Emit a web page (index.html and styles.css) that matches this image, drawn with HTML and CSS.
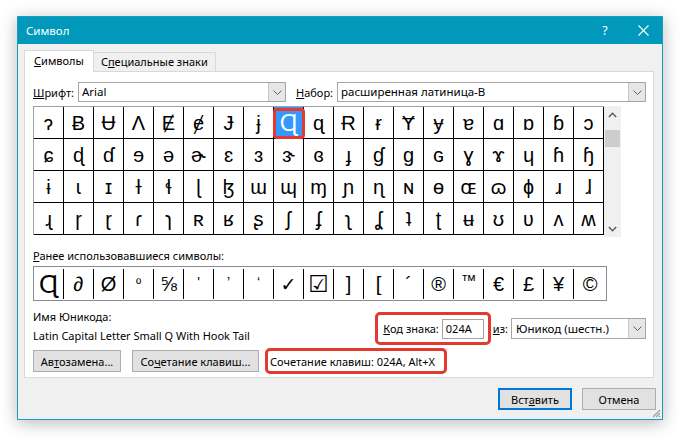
FILE: index.html
```html
<!DOCTYPE html>
<html lang="ru">
<head>
<meta charset="utf-8">
<title>Символ</title>
<link rel="stylesheet" href="styles.css">
</head>
<body>
<div class="dialog">
  <div class="titlebar">
    <span class="title">Символ</span>
    <span class="tb-help">?</span>
    <span class="tb-close"><svg width="11" height="11" viewBox="0 0 11 11"><path d="M0.5 0.5L10.5 10.5M10.5 0.5L0.5 10.5" stroke="#fff" stroke-width="1.1" fill="none"/></svg></span>
  </div>
  <div class="content">
    <div class="tabs">
      <div class="tab active"><u>С</u>имволы</div>
      <div class="tab">С<u>п</u>ециальные знаки</div>
    </div>
    <div class="panel">
      <div class="font-row">
        <span class="lbl lbl-font"><u>Ш</u>рифт:</span>
        <div class="select sel-font"><span class="sel-text">Arial</span><span class="sel-btn"><svg width="9" height="5" viewBox="0 0 9 5"><path d="M0.5 0.5L4.5 4.5L8.5 0.5" stroke="#606060" fill="none"/></svg></span></div>
        <span class="lbl lbl-set"><u>Н</u>абор:</span>
        <div class="select sel-set"><span class="sel-text">расширенная латиница-B</span><span class="sel-btn"><svg width="9" height="5" viewBox="0 0 9 5"><path d="M0.5 0.5L4.5 4.5L8.5 0.5" stroke="#606060" fill="none"/></svg></span></div>
      </div>
      <div class="charmap">
        <div class="cells">
          <span>ɂ</span><span>Ƀ</span><span>Ʉ</span><span>Ʌ</span><span>Ɇ</span><span>ɇ</span><span>Ɉ</span><span>ɉ</span><span class="selected">Ɋ</span><span>ɋ</span><span>Ɍ</span><span>ɍ</span><span>Ɏ</span><span>ɏ</span><span>ɐ</span><span>ɑ</span><span>ɒ</span><span>ɓ</span><span>ɔ</span>
          <span>ɕ</span><span>ɖ</span><span>ɗ</span><span>ɘ</span><span>ə</span><span>ɚ</span><span>ɛ</span><span>ɜ</span><span>ɝ</span><span>ɞ</span><span>ɟ</span><span>ɠ</span><span>ɡ</span><span>ɢ</span><span>ɣ</span><span>ɤ</span><span>ɥ</span><span>ɦ</span><span>ɧ</span>
          <span>ɨ</span><span>ɩ</span><span>ɪ</span><span>ɫ</span><span>ɬ</span><span>ɭ</span><span>ɮ</span><span>ɯ</span><span>ɰ</span><span>ɱ</span><span>ɲ</span><span>ɳ</span><span>ɴ</span><span>ɵ</span><span>ɶ</span><span>ɷ</span><span>ɸ</span><span>ɹ</span><span>ɺ</span>
          <span>ɻ</span><span>ɼ</span><span>ɽ</span><span>ɾ</span><span>ɿ</span><span>ʀ</span><span>ʁ</span><span>ʂ</span><span>ʃ</span><span>ʄ</span><span>ʅ</span><span>ʆ</span><span>ʇ</span><span>ʈ</span><span>ʉ</span><span>ʊ</span><span>ʋ</span><span>ʌ</span><span>ʍ</span>
        </div>
        <div class="vscroll">
          <svg class="arr" width="9" height="6" viewBox="0 0 9 6"><path d="M0.8 5L4.5 1.3L8.2 5" stroke="#606060" stroke-width="1.6" fill="none"/></svg>
          <div class="thumb"></div>
          <div class="track"></div>
          <svg class="arr" width="9" height="6" viewBox="0 0 9 6"><path d="M0.8 1L4.5 4.7L8.2 1" stroke="#606060" stroke-width="1.6" fill="none"/></svg>
        </div>
      </div>
      <div class="recent-label"><u>Р</u>анее использовавшиеся символы:</div>
      <div class="recent">
        <span class="big">Ɋ</span><span class="ital">∂</span><span>Ø</span><span class="small">º</span><span class="frac">⅝</span><span class="tiny">'</span><span class="tiny">’</span><span class="tiny">‘</span><span class="check">✓</span><span class="box">☑</span><span>]</span><span>[</span><span>´</span><span>®</span><span class="tm">™</span><span>€</span><span>£</span><span>¥</span><span>©</span>
      </div>
      <div class="lower">
        <div class="names">
          <div class="line">Имя Юникода:</div>
          <div class="line">Latin Capital Letter Small Q With Hook Tail</div>
        </div>
        <div class="code-group">
          <div class="hl code-box">
            <span class="lbl"><u>К</u>од знака:</span>
            <span class="input">024A</span>
          </div>
          <span class="lbl from-lbl"><u>и</u>з:</span>
          <div class="select sel-from"><span class="sel-text">Юникод (шестн.)</span><span class="sel-btn"><svg width="9" height="5" viewBox="0 0 9 5"><path d="M0.5 0.5L4.5 4.5L8.5 0.5" stroke="#606060" fill="none"/></svg></span></div>
        </div>
      </div>
      <div class="btn-row">
        <span class="btn btn-auto">Ав<u>т</u>озамена...</span>
        <span class="btn btn-keys">Со<u>ч</u>етание клавиш...</span>
        <div class="hl shortcut">Сочетание клавиш: 024A, Alt+X</div>
      </div>
    </div>
    <div class="footer">
      <span class="btn btn-default">Вст<u>а</u>вить</span>
      <span class="btn">Отмена</span>
    </div>
  </div>
  <svg class="grip" width="10" height="10" viewBox="0 0 10 10"><path d="M9 2L2 9M9 5L5 9M9 8L8 9" stroke="#a0a0a0" stroke-width="1.2"/></svg>
</div>
</body>
</html>
```
FILE: styles.css
```css
* { box-sizing: border-box; }
html, body { margin: 0; }
body {
  background: #ffffff;
  width: 684px;
  height: 442px;
  padding: 16px 0 0 17px;
  overflow: hidden;
  font-family: "Segoe UI", "Noto Sans", "DejaVu Sans", sans-serif;
  font-size: 11px;
  color: #000;
}
u { text-decoration: underline; text-underline-offset: 1px; }

.dialog {
  position: relative;
  width: 646px;
  height: 404px;
  background: #f0f0f0;
  border: 1px solid #1a9ec0;
  box-shadow: 0 3px 16px rgba(0,0,0,0.28);
  display: flex;
  flex-direction: column;
}
.titlebar {
  height: 27px;
  background: #0099bc;
  color: #fff;
  display: flex;
  align-items: center;
  padding-left: 8px;
}
.title { flex: 1; font-size: 11.5px; }
.tb-help { width: 14px; text-align: center; margin-right: 26px; font-size: 12.5px; }
.tb-close { width: 11px; height: 11px; margin-right: 13px; display: flex; }

.content {
  flex: 1;
  padding: 6px 6px 0 6px;
  display: flex;
  flex-direction: column;
}
.tabs { display: flex; height: 21px; }
.tab {
  height: 19px;
  margin-top: 2px;
  padding: 0 7px;
  border: 1px solid #d9d9d9;
  border-bottom: none;
  border-left: none;
  background: #f0f0f0;
  line-height: 17px;
}
.tab.active {
  position: relative;
  z-index: 1;
  height: 22px;
  margin-top: 0;
  padding: 0 9px;
  border-left: 1px solid #d9d9d9;
  background: #fff;
  line-height: 20px;
}
.panel {
  width: 630px;
  height: 307px;
  background: #fff;
  border: 1px solid #d9d9d9;
  padding: 10px 7px 0 8px;
}

.font-row { display: flex; align-items: center; height: 20px; }
.lbl { white-space: nowrap; }
.lbl-font { width: 45px; }
.lbl-set { width: 41px; margin-left: 10px; }
.select {
  height: 20px;
  border: 1px solid #a5a5a5;
  background: #fff;
  display: flex;
}
.sel-text { flex: 1; padding-left: 3px; line-height: 18px; white-space: nowrap; overflow: hidden; font-size: 11.5px; }
.sel-btn {
  width: 17px;
  background: #e6e6e6;
  border-left: 1px solid #c8c8c8;
  display: flex;
  align-items: center;
  justify-content: center;
}
.sel-font { width: 208px; }
.sel-set { width: 309px; }

.charmap {
  margin-top: 4px;
  display: flex;
  height: 131px;
}
.cells {
  display: grid;
  grid-template-columns: repeat(19, 30px);
  grid-auto-rows: 32px;
  border-top: 1px solid #a0a0a0;
  border-left: 1px solid #a0a0a0;
  align-self: flex-start;
  font-family: "Liberation Sans", "DejaVu Sans", sans-serif;
  font-size: 20px;
}
.cells span {
  border-right: 1px solid #000;
  border-bottom: 1px solid #000;
  display: flex;
  align-items: center;
  justify-content: center;
  line-height: 1;
}
.cells .selected {
  position: relative;
  background: #3399ff;
  color: #fff;
  font-size: 24px;
}
.cells .selected::after {
  content: "";
  position: absolute;
  left: -1px;
  top: 1px;
  right: -2px;
  bottom: -1px;
  border: 3px solid #e23a2e;
  border-radius: 4px;
}
.vscroll {
  width: 17px;
  background: #f0f0f0;
  display: flex;
  flex-direction: column;
  align-items: center;
  padding: 6px 0 5px;
}
.vscroll .arr { flex: none; }
.thumb { width: 15px; height: 17px; background: #cdcdcd; margin-top: 12px; }
.track { flex: 1; }

.recent-label { margin-top: 11px; line-height: 16px; }
.recent {
  margin-top: 2px;
  display: flex;
  width: 574px;
  height: 35px;
  border: 1px solid #8a8a95;
  font-family: "Liberation Sans", "DejaVu Sans", sans-serif;
  font-size: 20px;
}
.recent span {
  width: 30px;
  flex: none;
  border-right: 1px solid #000;
  margin: 2px 0 1px;
  display: flex;
  align-items: center;
  justify-content: center;
  line-height: 1;
}
.recent span:last-child { border-right: none; flex: 1; }
.recent .big { font-size: 26px; }
.recent .ital { font-style: italic; }
.recent .small { font-size: 14px; }
.recent .frac { font-size: 20px; }
.recent .tiny { font-size: 14px; align-items: flex-start; padding-top: 6px; }
.recent .tm { font-size: 16px; align-items: flex-start; padding-top: 4px; }
.recent .check { font-weight: bold; font-size: 19px; }
.recent .box { font-weight: bold; font-size: 23px; }

.lower {
  margin-top: 8px;
  display: flex;
  justify-content: space-between;
  align-items: flex-start;
}
.names { display: flex; flex-direction: column; gap: 3px; }
.line { line-height: 16px; white-space: nowrap; }
.code-group { margin-top: 3px; display: flex; align-items: center; }
.hl { border: 3px solid #e23a2e; border-radius: 5px; }
.code-box {
  height: 33px;
  display: flex;
  align-items: center;
  padding: 0 4px 0 5px;
  gap: 3px;
}
.input {
  width: 42px;
  height: 20px;
  border: 1px solid #a5a5a5;
  padding-left: 3px;
  line-height: 18px;
}
.from-lbl { margin: 0 3px 0 2px; }
.sel-from { width: 135px; height: 21px; }
.sel-from .sel-text { line-height: 19px; padding-left: 4px; }

.btn-row { margin-top: 3px; display: flex; align-items: center; }
.btn {
  height: 22px;
  border: 1px solid #adadad;
  background: #e1e1e1;
  display: flex;
  align-items: center;
  justify-content: center;
  white-space: nowrap;
}
.btn-auto { width: 88px; }
.btn-keys { width: 127px; margin-left: 11px; }
.shortcut {
  margin-left: 6px;
  width: 182px;
  height: 26px;
  padding-left: 2px;
  display: flex;
  align-items: center;
  white-space: nowrap;
}

.footer {
  display: flex;
  justify-content: flex-end;
  gap: 10px;
  padding-top: 10px;
}
.footer .btn { width: 74px; height: 22px; }
.footer .btn-default { border: 2px solid #0078d7; }

.grip { position: absolute; right: 1px; bottom: 1px; }
```
